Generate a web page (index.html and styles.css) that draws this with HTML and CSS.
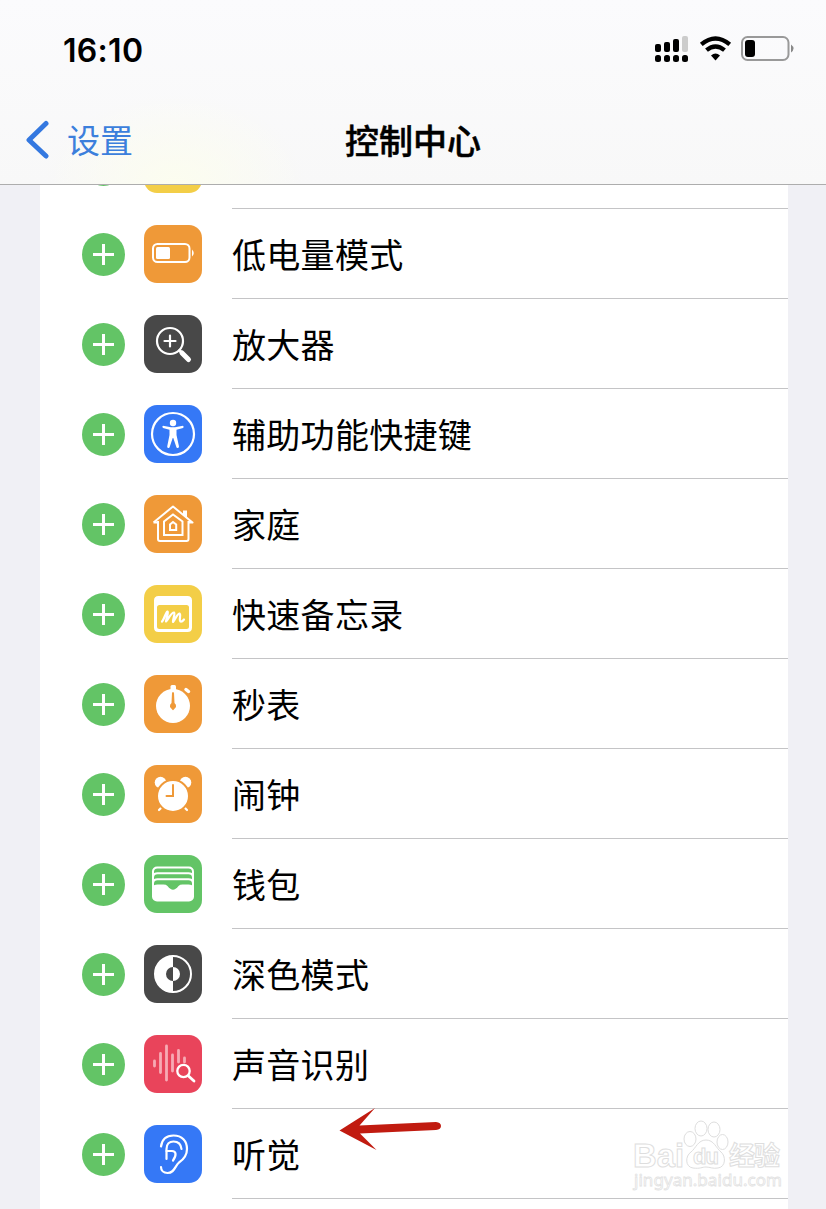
FILE: index.html
```html
<!DOCTYPE html>
<html lang="zh-CN">
<head>
	<meta charset="UTF-8">
	<title>控制中心</title>
	<link rel="stylesheet" href="styles.css">
</head>
<body>
	<header class="header">
		<div class="status">
			<span class="time">16:10</span>
			<svg class="state" width="140" height="28" viewBox="0 0 140 28">
				<g fill="#000">
					<rect x="0" y="8" width="6" height="8" rx="2"/>
					<rect x="9" y="6" width="6" height="10" rx="2"/>
					<rect x="18" y="3" width="6" height="13" rx="2"/>
					<rect x="27" y="0" width="6" height="16" rx="2" fill="#ccc"/>
					<rect x="0" y="19" width="6" height="7" rx="2.5"/>
					<rect x="9" y="19" width="6" height="7" rx="2.5"/>
					<rect x="18" y="19" width="6" height="7" rx="2.5"/>
					<rect x="27" y="19" width="6" height="7" rx="2.5"/>
					<path d="M56 19.5Q60.500 15.500 65 19.500L60.500 24.500Z"/>
				</g>
				<g fill="none" stroke="#000" stroke-width="4.300">
					<path d="M46.300 8.400Q60.500 -3.600 74.700 8.400"/>
					<path d="M51.500 14.200Q60.500 6.600 69.500 14.200"/>
				</g>
				<rect x="87" y="1" width="46.500" height="23" rx="5.500" fill="none" stroke="#999" stroke-width="2"/>
				<rect x="90" y="4" width="10" height="17" rx="3"/>
				<path d="M136 8.500Q141 12.500 136 16.500Z" fill="#888"/>
			</svg>
		</div>
		<nav class="nav">
			<a class="back">
				<svg width="26" height="40" viewBox="0 0 26 40"><path d="M21 3.500L4 20L21 36" fill="none" stroke="#3478e0" stroke-width="5" stroke-linecap="round" stroke-linejoin="round"/></svg>
				<span>设置</span>
			</a>
			<h1>控制中心</h1>
		</nav>
	</header>

	<ul class="list">
		<li>
			<i class="add"></i>
			<div class="icon yellow"></div>
			<p></p>
		</li>
		<li>
			<i class="add"></i>
			<div class="icon orange">
				<svg viewBox="0 0 58 58">
					<rect x="9" y="19" width="36.500" height="18" rx="4.500" fill="none" stroke="#fff" stroke-width="2"/>
					<rect x="12" y="22" width="14" height="12" rx="1.500"/>
					<path d="M48 24.500Q51.500 28 48 31.500Z"/>
				</svg>
			</div>
			<p>低电量模式</p>
		</li>
		<li>
			<i class="add"></i>
			<div class="icon dark">
				<svg viewBox="0 0 58 58">
					<g fill="none" stroke="#fff" stroke-linecap="round">
						<circle cx="26" cy="26" r="13" stroke-width="2.200"/>
						<path d="M20.500 26H31.500M26 20.500V31.500" stroke-width="2.200"/>
						<path d="M35.500 35.500L37 37" stroke-width="3"/>
						<path d="M38 38L44.500 44.500" stroke-width="5"/>
					</g>
				</svg>
			</div>
			<p>放大器</p>
		</li>
		<li>
			<i class="add"></i>
			<div class="icon blue">
				<svg viewBox="0 0 58 58">
					<circle cx="29" cy="29" r="21" fill="none" stroke="#fff" stroke-width="2.200"/>
					<circle cx="29" cy="18" r="3.200"/>
					<path d="M19 20.800L27 22.200H31L39 20.800Q40.500 22 39 23L32.500 24.800V30L35 41.500Q34.500 44 32.500 42.500L29.300 33H28.700L25.500 42.500Q23.500 44 23.200 41.500L25.500 30V24.800L19 23Q17.500 21.800 19 20.800Z"/>
				</svg>
			</div>
			<p>辅助功能快捷键</p>
		</li>
		<li>
			<i class="add"></i>
			<div class="icon orange">
				<svg viewBox="0 0 58 58">
					<g fill="none" stroke="#fff" stroke-width="2">
						<path d="M14 26V44Q14 46 16 46H42.500Q44.500 46 44.500 44V26M9.500 27.500L29 11.500L48.500 27.500H44.500M9.500 27.500H14" stroke-linejoin="round"/>
						<path d="M20 40V26.500L29 19.500L38.500 26.500V40Z"/>
						<path d="M26 35V29.500L29 27L32.200 29.500V35Z"/>
					</g>
					<path d="M39 15.500H43V22.500L39 19.500Z"/>
				</svg>
			</div>
			<p>家庭</p>
		</li>
		<li>
			<i class="add"></i>
			<div class="icon yellow">
				<svg viewBox="0 0 58 58">
					<path fill-rule="evenodd" d="M14.500 11H43.500Q48 11 48 15.500V42.500Q48 47 43.500 47H14.500Q10 47 10 42.500V15.500Q10 11 14.500 11ZM15.500 20Q13 20 13 22.500V41.500Q13 44 15.500 44H42.500Q45 44 45 41.500V22.500Q45 20 42.500 20Z"/>
					<path d="M18 36.500C20 35 21.500 27.500 23.500 26.500C25 27 22.500 32 22 36.500C24.500 34 27 27.500 30 27.500C31.500 28.500 29 33 29 37C31.500 34 33 29 35.500 28.500C37.500 29.500 34.500 35 36.500 36.500Q38 37 40 34.500" fill="none" stroke="#fff" stroke-width="2.200" stroke-linecap="round" stroke-linejoin="round"/>
				</svg>
			</div>
			<p>快速备忘录</p>
		</li>
		<li>
			<i class="add"></i>
			<div class="icon orange">
				<svg viewBox="0 0 58 58">
					<circle cx="29" cy="31" r="17"/>
					<rect x="26.500" y="10" width="5.500" height="6" rx="1.500"/>
					<path d="M42 14.500L44.500 16.500" stroke="#fff" stroke-width="3.500" stroke-linecap="round"/>
					<path d="M28 18Q29 16 30 18L30.500 28Q32.500 29.500 32 32Q31 33 29.800 34.500Q29 36 28.200 34.500Q27 33 26 32Q25.500 29.500 27.500 28Z" fill="#ef9938"/>
				</svg>
			</div>
			<p>秒表</p>
		</li>
		<li>
			<i class="add"></i>
			<div class="icon orange">
				<svg viewBox="0 0 58 58">
					<circle cx="16.500" cy="17.500" r="5.800"/>
					<circle cx="41.500" cy="17.500" r="5.800"/>
					<path d="M19 41L15 45M39 41L43 45" stroke="#fff" stroke-width="2.200" stroke-linecap="round"/>
					<circle cx="29" cy="31" r="16" stroke="#ef9938" stroke-width="2"/>
					<path d="M29 20V31H22.500" fill="none" stroke="#ef9938" stroke-width="2" stroke-linecap="round"/>
				</svg>
			</div>
			<p>闹钟</p>
		</li>
		<li>
			<i class="add"></i>
			<div class="icon green">
				<svg viewBox="0 0 58 58">
					<rect x="8" y="11.500" width="42" height="35" rx="5"/>
					<g fill="#63c466">
						<path d="M10 18V16.500Q10.200 13.500 13.500 13.500H44.500Q47.800 13.500 48 16.500V18Q46.500 17.200 44.500 17.200H13.500Q11.500 17.200 10 18Z"/>
						<path d="M10 24V22.500Q10.200 19.300 13.500 19.300H44.500Q47.800 19.300 48 22.500V24Q46.500 23.200 44.500 23.200H13.500Q11.500 23.200 10 24Z"/>
						<path d="M10 30.200V28.500Q10.200 25.300 13.500 25.300H44.500Q47.800 25.300 48 28.500V30.200Q46.500 29.600 44.500 29.600H38.500Q36 29.600 34.500 31Q31.500 34.800 29 34.800Q26.500 34.800 23.500 31Q22 29.600 19.500 29.600H13.500Q11.500 29.600 10 30.200Z"/>
					</g>
				</svg>
			</div>
			<p>钱包</p>
		</li>
		<li>
			<i class="add"></i>
			<div class="icon dark">
				<svg viewBox="0 0 58 58">
					<circle cx="29" cy="29" r="18" fill="none" stroke="#fff" stroke-width="2"/>
					<path d="M29 11A18 18 0 0 0 29 47V36A7 7 0 0 1 29 22Z"/>
					<path d="M29 22A7 7 0 0 1 29 36Z"/>
				</svg>
			</div>
			<p>深色模式</p>
		</li>
		<li>
			<i class="add"></i>
			<div class="icon red">
				<svg viewBox="0 0 58 58">
					<path d="M10.500 26V31M16.500 18.500V37.500M22.500 11V45M28.500 20V36M34.500 15.500V27M40.500 23V27" stroke="#f7aab4" stroke-width="2.800" stroke-linecap="round"/>
					<circle cx="39.500" cy="36" r="6.200" fill="#e9445b" stroke="#fff" stroke-width="2.300"/>
					<path d="M44.500 41L50 46" stroke="#fff" stroke-width="2.800" stroke-linecap="round"/>
				</svg>
			</div>
			<p>声音识别</p>
		</li>
		<li>
			<i class="add"></i>
			<div class="icon blue">
				<svg viewBox="0 0 58 58">
					<g fill="none" stroke="#fff" stroke-width="2.200" stroke-linecap="round" stroke-linejoin="round">
						<path d="M17 21.500C18 14 23 10.500 29.500 10.500C38 10.500 43 16 43 24C43 31 39.500 34.500 35 37.500C31 41 30.500 48 23.500 48C19.500 48 17 45.500 17 42"/>
						<path d="M22.500 34V24C22.500 19 25.500 16.500 29.500 16.500C34 16.500 37 19.500 37.500 24"/>
						<path d="M22.500 26H28C32 26 33 30 29 35.500"/>
					</g>
				</svg>
			</div>
			<p>听觉</p>
		</li>
	</ul>

	<!-- red pointer -->
	<svg class="arrow" width="104" height="46" viewBox="0 0 104 46">
		<path d="M0.500 23.500L36 1L20.500 18.500L97 15Q102 15.500 102 19Q102 22.500 97 23L21 26.500L37.500 43Z" fill="#c11b10"/>
	</svg>

	<svg class="mark" width="160" height="78" viewBox="0 0 160 78">
		<g fill="#fff" stroke="#dedede" stroke-width="1">
			<text class="logo" x="2" y="49" font-size="34" textLength="51" lengthAdjust="spacingAndGlyphs">Bai</text>
			<ellipse cx="59" cy="21" rx="6" ry="7.500"/>
			<ellipse cx="70" cy="10.500" rx="6" ry="7.500"/>
			<ellipse cx="83" cy="11.500" rx="6" ry="7.500"/>
			<ellipse cx="91.500" cy="24" rx="5.500" ry="7.500"/>
			<path d="M75 22C67 22 65 30 60 34C54 38 54 49 62 50C69 51 71 49 75 49C79 49 82 51 87 50C95 49 95 38 90 34C85 30 83 22 75 22Z"/>
			<text class="logo" x="62" y="46" font-size="22" textLength="26">du</text>
			<text class="logo" x="98" y="47" font-size="26" textLength="51">经验</text>
		</g>
		<text class="site" x="3" y="68" font-size="17" textLength="148" fill="#fff" stroke="#e2e2e2" stroke-width=".8">jingyan.baidu.com</text>
	</svg>
</body>
</html>
```
FILE: styles.css
```css
*{
	margin: 0;
	padding: 0;
	list-style: none;
	box-sizing: border-box;
}
body{
	height: 1209px;
	overflow: hidden;
	position: relative;
	background: #f0f0f5;
	color: #000;
	font-family: "Inter","Noto Sans CJK SC",sans-serif;
}
svg{
	display: block;
}
.header{
	position: relative;
	z-index: 1;
	height: 185px;
	border-bottom: 1px solid #adadad;
	background: radial-gradient(ellipse 130px 90px at 175px 184px,#fcfdef,rgba(252,253,239,0)),linear-gradient(#fbfbfd,#f8f8f8);
}
.status{
	height: 96px;
	padding: 4px 31px 0 63px;
	display: flex;
	align-items: center;
	justify-content: space-between;
}
.time{
	font-size: 32px;
	font-weight: 600;
	letter-spacing: .3px;
}
.nav{
	height: 88px;
	display: grid;
	grid-template-columns: 1fr auto 1fr;
	align-items: center;
}
.back{
	display: flex;
	align-items: center;
	padding-left: 25px;
	color: #3c7fdc;
	font-size: 33px;
	line-height: 46px;
}
.back span{
	margin-left: 16px;
	padding-top: 2px;
}
.nav h1{
	padding-top: 3px;
	font-size: 34px;
	font-weight: 500;
	line-height: 48px;
	-webkit-text-stroke: .5px #000;
}
.list{
	width: 748px;
	height: 1100px;
	/* first row is scrolled under the header */
	margin: -66px 0 0 40px;
	background: #fff;
}
.list li{
	height: 90px;
	padding-left: 42px;
	display: flex;
	align-items: center;
}
.list p{
	flex: 1;
	height: 90px;
	margin-left: 30px;
	border-bottom: 1px solid #c4c4c6;
	font-size: 34px;
	line-height: 93px;
	letter-spacing: .3px;
}
.add{
	width: 43px;
	height: 43px;
	border-radius: 50%;
	background: linear-gradient(#fff,#fff) center/21px 3px no-repeat,linear-gradient(#fff,#fff) center/3px 21px no-repeat,#63c466;
}
.icon{
	width: 58px;
	height: 58px;
	margin-left: 19px;
	border-radius: 13px;
}
.icon svg{
	fill: #fff;
}
.orange{
	background: #ef9938;
}
.yellow{
	background: #f3ce47;
}
.dark{
	background: #484848;
}
.blue{
	background: #3578f6;
}
.green{
	background: #63c466;
}
.red{
	background: #e9445b;
}
.arrow{
	position: absolute;
	left: 339px;
	top: 1107px;
}
.mark{
	position: absolute;
	left: 631px;
	top: 1118px;
}
.logo{
	font-family: "Liberation Sans","Noto Sans CJK SC",sans-serif;
	font-weight: bold;
}
.site{
	font-family: "Noto Sans",sans-serif;
}
```
